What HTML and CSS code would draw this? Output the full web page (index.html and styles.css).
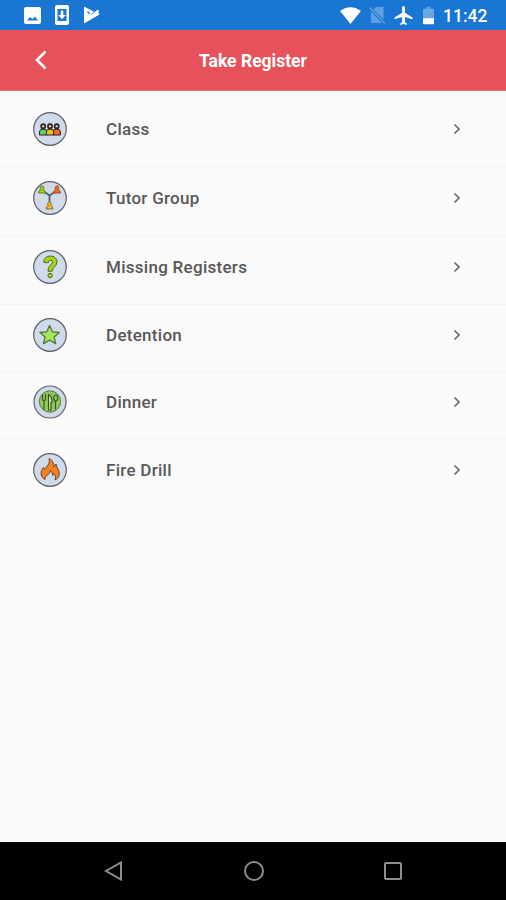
FILE: index.html
```html
<!DOCTYPE html>
<html lang="en">

<head>
    <meta charset="UTF-8">
    <meta name="viewport" content="width=device-width, initial-scale=1.0">
    <title>Take Register</title>
    <link rel="stylesheet" href="styles.css">
</head>

<body>
    <div class="phone">
        <!-- status bar -->
        <div class="status">
            <div class="status-left">
                <svg width="17" height="17" viewBox="0 0 17 17">
                    <path fill="#fff" fill-rule="evenodd" d="M2 0h13a2 2 0 0 1 2 2v13a2 2 0 0 1-2 2H2a2 2 0 0 1-2-2V2a2 2 0 0 1 2-2zM3 13.500h11L11 9.500 8.500 12 6 10z" />
                </svg>
                <svg width="14" height="20" viewBox="0 0 14 20">
                    <path fill="#fff" fill-rule="evenodd" d="M2 0h10a2 2 0 0 1 2 2v16a2 2 0 0 1-2 2H2a2 2 0 0 1-2-2V2a2 2 0 0 1 2-2zM2.500 4v12h9V4z" />
                    <path fill="#fff" d="M5.700 5.500h2.600v4.500h2.500L7 14.300 3.200 10h2.500z" />
                </svg>
                <svg width="17" height="18" viewBox="0 0 17 18">
                    <path fill="#fff" d="M1 0.500L12 6.200 15 6 16.500 8.500 1 17.500z" />
                    <path fill="none" stroke="#1976d2" stroke-width="1.300" d="M4.500 5.500L8 9.500 15.500 2.500" />
                    <path fill="none" stroke="#fff" stroke-width="2.400" d="M6 8L8.500 10.500 15.500 4.500" />
                </svg>
            </div>
            <div class="status-right">
                <svg class="wifi" width="21" height="17" viewBox="0 0 22 18">
                    <path fill="#fff" d="M0 4.200C6-1.200 16-1.200 22 4.200L11 18z" />
                </svg>
                <svg class="sim" width="17" height="18" viewBox="0 0 17 18">
                    <path fill="#5e9fe0" d="M7 1h7.500v12.500L4.500 3.500zM2 5.500L13 17H2z" />
                    <path fill="none" stroke="#5e9fe0" stroke-width="1.400" d="M0.500 1.500L16 17.500" />
                </svg>
                <svg class="plane" width="19" height="19" viewBox="2 2 19 20">
                    <path fill="#fff" d="M21 16v-2l-8-5V3.500a1.500 1.500 0 0 0-3 0V9l-8 5v2l8-2.500V19l-2 1.500V22l3.500-1 3.500 1v-1.500L13 19v-5.500z" />
                </svg>
                <svg class="battery" width="11" height="19" viewBox="0 0 12 19">
                    <path fill="#6aa6e3" d="M4 0h4v2h3a1 1 0 0 1 1 1v10H0V3a1 1 0 0 1 1-1h3z" />
                    <path fill="#fff" d="M0 12.500h12V18a1 1 0 0 1-1 1H1a1 1 0 0 1-1-1z" />
                </svg>
                <span class="time">11:42</span>
            </div>
        </div>

        <div class="header">
            <svg class="back" width="12" height="20" viewBox="0 0 12 20">
                <path d="M10.500 1.500L2 10l8.500 8.500" />
            </svg>
            <h1>Take Register</h1>
        </div>

        <ul class="menu">
            <li>
                <svg class="icon" viewBox="0 0 34 34">
                    <circle class="disc" cx="17" cy="17" r="16.300" />
                    <g stroke="#222" stroke-width="1">
                        <path fill="#62d267" d="M6.500 23v-3q0-3 3.700-3t3.700 3v3z" />
                        <path fill="#f36b21" d="M20 23v-3q0-3 3.700-3t3.700 3v3z" />
                        <path fill="#f8bd16" d="M13.300 23v-3q0-3 3.700-3t3.700 3v3z" />
                        <g fill="#e8c5ad" stroke-width="1.600">
                            <circle cx="10.200" cy="14.200" r="2.100" />
                            <circle cx="17" cy="14.200" r="2.100" />
                            <circle cx="23.700" cy="14.200" r="2.100" />
                        </g>
                    </g>
                </svg>
                <span>Class</span>
                <svg class="arrow" viewBox="0 0 8 12"><path d="M1.500 1.500L6 6l-4.500 4.500" /></svg>
            </li>
            <li>
                <svg class="icon" viewBox="0 0 34 34">
                    <circle class="disc" cx="17" cy="17" r="16.300" />
                    <path fill="none" stroke="#4e5966" stroke-width="1.700" d="M11 10.500l5.500 4 6-4M16.500 14.500V23" />
                    <g stroke-width=".9">
                        <path fill="#9bd31f" stroke="#527719" d="M5.500 12q0-3 2.500-3.500a1.900 1.900 0 1 1 2 0q2.300.5 2.500 3.500z" />
                        <path fill="#ed6829" stroke="#984323" d="M20.500 12q0-3 2.500-3.500a1.900 1.900 0 1 1 2 0q2.300.5 2.500 3.500z" />
                        <path fill="#f8b81d" stroke="#806024" d="M13 28q0-3 2.500-3.500a1.900 1.900 0 1 1 2 0q2.300.5 2.500 3.500z" />
                    </g>
                </svg>
                <span>Tutor Group</span>
                <svg class="arrow" viewBox="0 0 8 12"><path d="M1.500 1.500L6 6l-4.500 4.500" /></svg>
            </li>
            <li>
                <svg class="icon" viewBox="0 0 34 34">
                    <circle class="disc" cx="17" cy="17" r="16.300" />
                    <g fill="#a5d51b" stroke="#4b641c" stroke-width="1">
                        <path d="M10.800 12.300C10.500 4 24 4 24 12c0 4.500-4.800 5-4.800 9.200h-4.200c0-6 4.500-6.500 4.500-9.200 0-2.500-4.300-2.500-4.300.8z" />
                        <circle cx="17.100" cy="25.500" r="2.200" />
                    </g>
                </svg>
                <span>Missing Registers</span>
                <svg class="arrow" viewBox="0 0 8 12"><path d="M1.500 1.500L6 6l-4.500 4.500" /></svg>
            </li>
            <li class="short">
                <svg class="icon" viewBox="0 0 34 34">
                    <circle class="disc" cx="17" cy="17" r="16.300" />
                    <path fill="#a0e957" stroke="#557343" stroke-width="1.300" stroke-linejoin="round" d="M16.600 7.500l2.800 6.300 6.900.7-5.200 4.500 1.600 6.700-6.100-3.600-6.100 3.600 1.600-6.700-5.200-4.500 6.900-.7z" />
                </svg>
                <span>Detention</span>
                <svg class="arrow" viewBox="0 0 8 12"><path d="M1.500 1.500L6 6l-4.500 4.500" /></svg>
            </li>
            <li class="shorter">
                <svg class="icon" viewBox="0 0 34 34">
                    <circle class="disc" cx="17" cy="17" r="16" />
                    <circle fill="#91c958" stroke="#5c7b48" cx="17" cy="16.500" r="10.700" />
                    <!-- fork, knife and spoon -->
                    <g fill="none" stroke="#36542b" stroke-width="1.200">
                        <path d="M9.500 9.500v4q0 2 1.500 2.500v9M12.500 9v4.500q0 2-1.500 2.500" />
                        <path fill="#c0ee7e" d="M15.500 25V9.500q4 2 3.500 8h-1V25z" />
                        <path fill="#74b342" d="M22.500 16v8.500" />
                        <ellipse fill="#8bd553" cx="22.700" cy="13" rx="2" ry="3" />
                    </g>
                </svg>
                <span>Dinner</span>
                <svg class="arrow" viewBox="0 0 8 12"><path d="M1.500 1.500L6 6l-4.500 4.500" /></svg>
            </li>
            <li class="last">
                <svg class="icon" viewBox="0 0 34 34">
                    <circle class="disc" cx="17" cy="17" r="16.300" />
                    <path fill="#f58220" stroke="#6b422c" stroke-width="1" stroke-linejoin="round" d="M12 26.500C6.500 23 7.500 18 10.500 14.500l1 2C13.500 13.500 17.500 11 16 5.500c4 2 5 5 4.800 8.500l2.200-3c.2 3.500 4 6.500 3.300 10.500-.3 2.500-2 4.300-4.300 5.500 1.300-3 .5-5-1.300-6.500l-1 2c-.2-2.500-.7-3.500-2.200-5-.5 4-3.500 4-4.500 6-.5 1-1.200 1.500-1 3z" />
                </svg>
                <span>Fire Drill</span>
                <svg class="arrow" viewBox="0 0 8 12"><path d="M1.500 1.500L6 6l-4.500 4.500" /></svg>
            </li>
        </ul>

        <!-- android buttons -->
        <div class="nav">
            <svg width="20" height="20" viewBox="0 0 20 20"><path d="M17 1.500v17L2 10z" /></svg>
            <svg width="20" height="20" viewBox="0 0 20 20"><circle cx="10" cy="10" r="9" /></svg>
            <svg width="20" height="20" viewBox="0 0 20 20"><rect x="2" y="2" width="16" height="16" rx="1" /></svg>
        </div>
    </div>
</body>

</html>
```
FILE: styles.css
```css
* {
    margin: 0;
    padding: 0;
    box-sizing: border-box;
}

body {
    font-family: Roboto, "Liberation Sans", sans-serif;
    background-color: #fafafa;
}

ul,
li {
    list-style: none;
}

svg {
    display: block;
    flex: none;
}

.phone {
    display: flex;
    flex-direction: column;
    height: 900px;
    overflow: hidden;
}

.status {
    display: flex;
    justify-content: space-between;
    height: 30px;
    padding: 0 18px 0 24px;
    background-color: #1976d2;
}

.status-left,
.status-right {
    display: flex;
    align-items: center;
}

.status-left {
    gap: 14px;
}

.wifi {
    margin-right: 8px;
}

.sim {
    margin-right: 8px;
}

.plane {
    margin-right: 10px;
}

.battery {
    margin-right: 9px;
}

.time {
    width: 45px;
    font-size: 17.5px;
    font-weight: 500;
    line-height: 30px;
    padding-top: 2px;
    white-space: nowrap;
    color: #fff;
}

.header {
    display: grid;
    grid-template-columns: 60px 1fr 60px;
    align-items: center;
    height: 61px;
    background-color: #e7515a;
    border-bottom: 1px solid #ec6d75;
}

.back {
    margin-left: 35px;
    fill: none;
    stroke: #fff;
    stroke-width: 2.6;
}

.header h1 {
    padding-top: 2px;
    font-size: 17.5px;
    font-weight: 700;
    text-align: center;
    color: #fff;
}

.menu {
    flex: 1;
    padding-top: 7px;
}

.menu li {
    display: flex;
    align-items: center;
    height: 69px;
    padding: 0 45px 7px 33px;
    border-bottom: 1px solid #f2f2f2;
}

.menu li.short {
    height: 68px;
}

.menu li.shorter {
    height: 66px;
}

.menu li.last {
    height: 70px;
    padding-bottom: 8px;
    border-bottom-color: #f8f8f8;
}

.menu span {
    flex: 1;
    font-size: 17px;
    font-weight: 500;
    letter-spacing: 0.28px;
    color: #585858;
}

.icon {
    width: 34px;
    height: 34px;
    margin-right: 39px;
}

.disc {
    fill: #d0daea;
    stroke: #5c6068;
    stroke-width: 1.2;
}

.arrow {
    width: 8px;
    height: 12px;
    fill: none;
    stroke: #6a6a6a;
    stroke-width: 1.7;
}

.nav {
    display: flex;
    justify-content: space-between;
    align-items: center;
    height: 58px;
    padding: 0 103px 0 104px;
    background-color: #000;
}

.nav svg {
    fill: none;
    stroke: #8d8d8d;
    stroke-width: 2;
}
```
